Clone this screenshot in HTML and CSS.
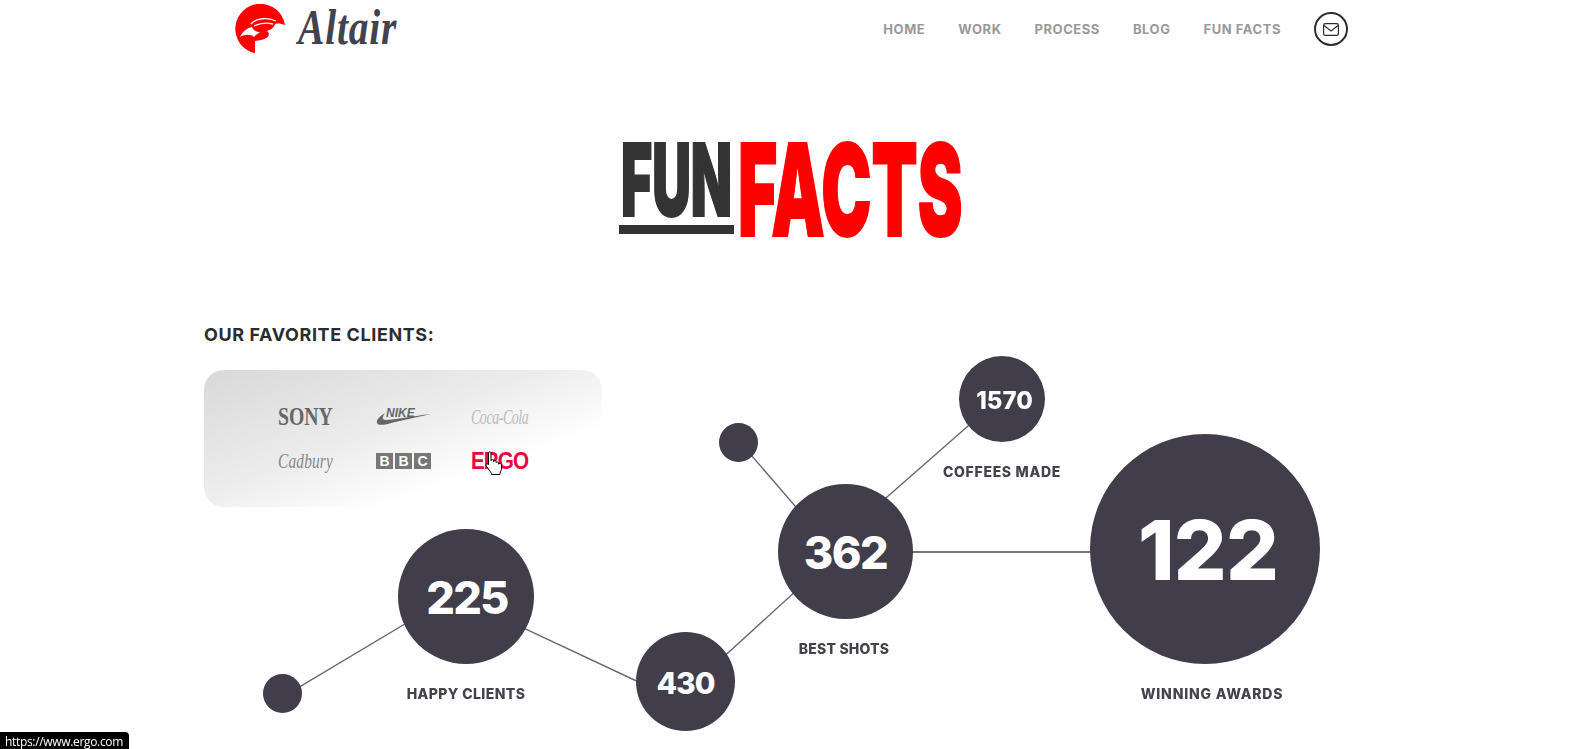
FILE: index.html
```html
<!DOCTYPE html>
<html lang="en">
<head>
<meta charset="utf-8">
<title>Altair - Fun Facts</title>
<link rel="stylesheet" href="styles.css">
</head>
<body>
<div class="page">
  <header class="site-header">
    <a class="brand" href="#">
      <svg class="brand-mark" viewBox="0 0 52 52" width="52" height="52" aria-hidden="true">
        <path fill="#f00" d="M51 21A25 25 0 1 0 21 49.3L21 37C25 36 29 36 32 34C35 33 36 29 33 27C36 26 40 24 41 20C44 19 48 20 51 21Z"/>
        <path fill="#fff" d="M6 33C8 28 13 24 18 23C19 26 22 28 26 28C24 30 21 31 20 33C17 30 11 30 6 33Z"/>
        <path fill="none" stroke="#fff" stroke-width="1.3" d="M17 20C22 14 33 13 42 17M20 22C26 19 33 18.500 39 20"/>
      </svg>
      <span class="brand-name">Altair</span>
    </a>
    <nav class="main-nav">
      <a href="#">HOME</a>
      <a href="#">WORK</a>
      <a href="#">PROCESS</a>
      <a href="#">BLOG</a>
      <a href="#">FUN FACTS</a>
      <a class="mail" href="#" aria-label="Contact">
        <svg viewBox="0 0 16 13" width="16" height="13" aria-hidden="true">
          <rect x=".6" y=".6" width="14.8" height="11.8" rx="1.6" fill="none" stroke="#2b2d33" stroke-width="1.2"/>
          <path d="M1 2.6L8 8L15 2.6" fill="none" stroke="#2b2d33" stroke-width="1.2"/>
        </svg>
      </a>
    </nav>
  </header>

  <h1 class="page-title"><span class="fun"><span class="fun-text">FUN</span></span><span class="facts">FACTS</span></h1>

  <section class="clients">
    <h2>OUR FAVORITE CLIENTS:</h2>
    <div class="client-card">
      <span class="logo sony"><span>SONY</span></span>
      <span class="logo nike">
        <svg viewBox="0 0 55 20" width="55" height="20" aria-hidden="true">
          <text x="10" y="10" class="nike-word">NIKE</text>
          <path fill="#666" d="M55 7L17 15.5C9 18 2 19 1 16C0 13 4 9 9 6C6 10 6 13 10 13C15 13 31 10 55 7Z"/>
        </svg>
      </span>
      <span class="logo coke"><span>Coca-Cola</span></span>
      <span class="logo cadbury"><span>Cadbury</span></span>
      <span class="logo bbc"><b>B</b><b>B</b><b>C</b></span>
      <span class="logo ergo"><span>ERGO</span>
        <svg class="cursor" viewBox="0 0 18 24" width="18" height="24" aria-hidden="true">
          <path fill="#fff" stroke="#000" stroke-width="1" stroke-linejoin="round" d="M3.5 1.8C3.5 .6 6 .6 6 1.8V9.5C6 8.4 8.6 8.4 8.6 9.6V10.6C8.6 9.5 11.2 9.5 11.2 10.8V11.6C11.2 10.6 13.7 10.6 13.7 11.9V13.2C13.7 12.2 16.5 12.2 16.5 13.8V17C16.5 19 15.5 20.5 15 22V23.5H6.5V22.5C5.5 20.5 3.5 18 1.2 15C.2 13.4 2 12 3.5 13.6Z"/>
        </svg>
      </span>
    </div>
  </section>

  <div class="diagram">
    <svg class="links" viewBox="0 0 1571 749" width="1571" height="749" aria-hidden="true">
      <g stroke="#6a6771" stroke-width="1.4">
        <line x1="282" y1="697.3" x2="440" y2="603"/>
        <line x1="500" y1="617" x2="660" y2="692"/>
        <line x1="700" y1="678.4" x2="820" y2="569"/>
        <line x1="739" y1="441" x2="820" y2="535"/>
        <line x1="860" y1="520.7" x2="990" y2="406.7"/>
        <line x1="845" y1="552" x2="1204" y2="552" stroke="#48455a"/>
      </g>
    </svg>
    <div class="node dot dot-a"></div>
    <div class="node dot dot-b"></div>
    <div class="node n-225">225</div>
    <div class="node n-430">430</div>
    <div class="node n-362">362</div>
    <div class="node n-1570">1570</div>
    <div class="node n-122">122</div>
    <div class="stat-label l-happy">HAPPY CLIENTS</div>
    <div class="stat-label l-best">BEST SHOTS</div>
    <div class="stat-label l-coffee">COFFEES MADE</div>
    <div class="stat-label l-win">WINNING AWARDS</div>
  </div>

  <div class="status-url">https://www.ergo.com</div>
</div>
</body>
</html>
```

FILE: styles.css
```css
* { box-sizing: border-box; }
html, body { margin: 0; padding: 0; background: #fff; }
body { font-family: "Inter", "Liberation Sans", sans-serif; overflow: hidden; }
a { text-decoration: none; color: inherit; }

.page { position: relative; width: 1571px; height: 749px; overflow: hidden; }

/* header */
.site-header { display: flex; justify-content: space-between; align-items: flex-start; height: 60px; padding: 4px 223px 0 234px; }
.brand { display: flex; align-items: flex-start; gap: 12px; }
.brand-mark { display: block; }
.brand-name { display: block; font-family: "Liberation Serif", serif; font-style: italic; font-weight: 700; font-size: 50px; line-height: 46px; color: #45424f; letter-spacing: 1px; transform: scaleX(.79); transform-origin: 0 0; }
.main-nav { display: flex; align-items: center; gap: 33px; height: 50px; font-size: 13px; font-weight: 700; color: #999; letter-spacing: .55px; }
.mail { display: flex; align-items: center; justify-content: center; width: 34px; height: 34px; border: 2px solid #2b2d33; border-radius: 50%; }

/* title */
.page-title { display: flex; margin: 0; padding: 70px 0 0 619px; height: 260px; font-family: "Inter", "Liberation Sans", sans-serif; font-weight: 900; }
.fun { display: block; flex: none; width: 115px; height: 94px; margin: 10px 4px 0 0; border-bottom: 9px solid #333; }
.fun-text { display: block; width: 240px; font-size: 100px; line-height: 79px; color: #333; -webkit-text-stroke: 2px #333; transform: translateX(2px) scaleX(.535); transform-origin: 0 0; }
.facts { display: block; flex: none; width: 223px; font-size: 128px; line-height: 97px; color: #f00; -webkit-text-stroke: 2px #f00; transform: scaleX(.525); transform-origin: 0 0; margin-top: 11px; }

/* clients */
.clients { padding: 4px 0 0 204px; }
.clients h2 { margin: 0 0 24px; font-size: 18px; line-height: 22px; font-weight: 700; color: #2c2c2c; letter-spacing: .6px; }
.client-card { position: relative; display: grid; grid-template-columns: 98px 95px 57px; grid-template-rows: 20px 20px; row-gap: 24px; width: 398px; height: 137px; padding: 37px 0 0 74px; border-radius: 20px; background: linear-gradient(160deg, #d8d8d8 0%, #ededed 45%, #fff 72%); }
.logo { display: flex; align-items: center; height: 20px; white-space: nowrap; }
.logo > span { display: block; transform-origin: 0 50%; }
.sony span { font-family: "Liberation Serif", serif; font-weight: 700; font-size: 25px; color: #666; transform: scaleX(.79); }
.nike svg { display: block; }
.nike-word { font-family: "Liberation Sans", sans-serif; font-weight: 700; font-style: italic; font-size: 12px; fill: #666; }
.coke span { font-family: "Liberation Serif", serif; font-style: italic; font-size: 21px; color: #bbb; letter-spacing: -.6px; transform: scaleX(.66); }
.cadbury span { font-family: "Liberation Serif", serif; font-style: italic; font-size: 20px; color: #888; letter-spacing: .2px; transform: scaleX(.77); }
.bbc { gap: 2px; }
.bbc b { display: block; width: 17px; height: 16px; background: #777; color: #fff; font-family: "Liberation Sans", sans-serif; font-size: 14px; line-height: 16px; text-align: center; }
.ergo { position: relative; font-family: "Liberation Sans", sans-serif; font-weight: 700; font-size: 23px; color: #ee0044; letter-spacing: -1.1px; }
.ergo > span { transform: scaleX(.9); }
.cursor { position: absolute; left: 14px; top: 0; }

/* diagram */
.diagram { position: absolute; left: 0; top: 0; width: 1571px; height: 749px; pointer-events: none; filter: blur(.35px); }
.links { position: absolute; left: 0; top: 0; }
.node { position: absolute; display: flex; align-items: center; justify-content: center; padding-top: 2px; border-radius: 50%; background: #413d4b; color: #fff; font-weight: 800; }
.dot { width: 39px; height: 39px; }
.dot-a { left: 263px; top: 674px; }
.dot-b { left: 719px; top: 423px; }
.n-225 { left: 398px; top: 529px; width: 136px; height: 135px; padding-left: 2px; font-size: 45px; letter-spacing: -1.8px; }
.n-430 { left: 636px; top: 632px; width: 99px; height: 99px; font-size: 30px; letter-spacing: -1px; }
.n-362 { left: 778px; top: 484px; width: 135px; height: 135px; font-size: 45px; letter-spacing: -1.5px; }
.n-1570 { left: 959px; top: 356px; width: 86px; height: 86px; padding-left: 5px; font-size: 24px; }
.n-122 { left: 1090px; top: 434px; width: 230px; height: 230px; padding-left: 6px; font-size: 83px; letter-spacing: -.8px; }
.stat-label { position: absolute; width: 200px; text-align: center; font-size: 14px; line-height: 16px; font-weight: 800; color: #45424d; letter-spacing: .4px; }
.l-happy { left: 366px; top: 686px; }
.l-best { left: 744px; top: 641px; letter-spacing: .2px; }
.l-coffee { left: 902px; top: 464px; letter-spacing: .7px; }
.l-win { left: 1112px; top: 686px; letter-spacing: .8px; }

/* browser status bubble */
.status-url { position: absolute; left: 0; bottom: 0; width: 129px; height: 17px; padding: 3px 0 0 5px; background: #000; border-top-right-radius: 4px; color: #fff; font-family: "Open Sans", "Liberation Sans", sans-serif; font-size: 12px; line-height: 13px; letter-spacing: -.33px; white-space: nowrap; }
```
